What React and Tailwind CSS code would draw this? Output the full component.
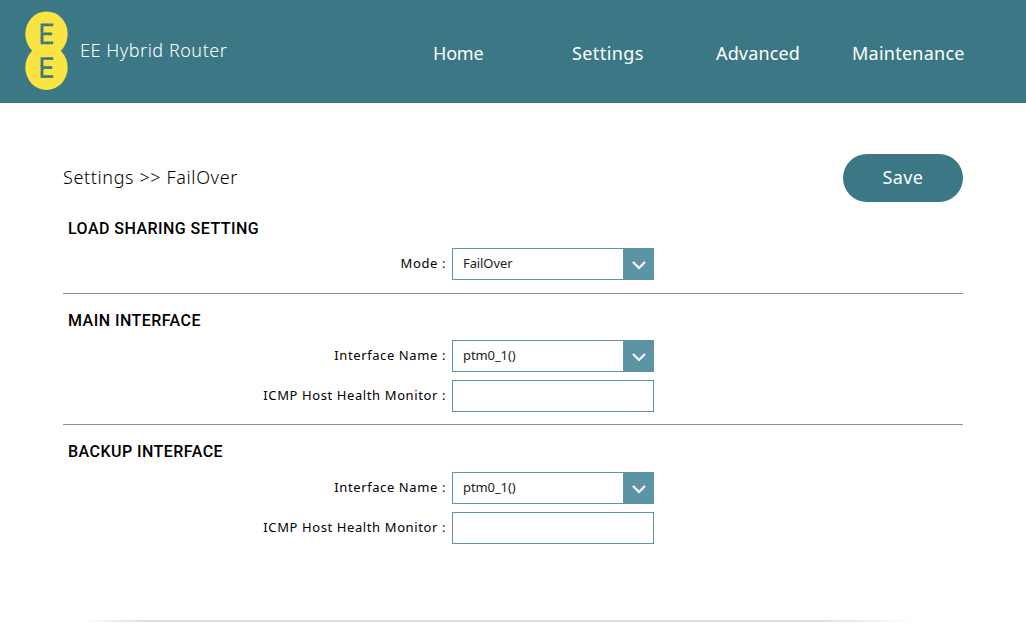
const dots = [];
for (let r = 0; r < 9; r++) {
  for (let c = 0; c < 5; c++) {
    if (c === 0 || r === 0 || r === 8 || r === 4) dots.push([c, r]);
  }
}

function LetterE({ y }) {
  return (
    <g fill="#3b7784">
      {dots.map(([c, r]) => (
        <circle key={`${c}-${r}`} cx={17 + c * (r === 4 ? 2.2 : 2.45)} cy={y + r * 2.25} r={1.6} />
      ))}
    </g>
  );
}

function Logo() {
  return (
    <svg className="h-[80px] w-[43px]" viewBox="0 0 43 80">
      <ellipse cx="21.5" cy="23" rx="21.2" ry="22.6" fill="#fae442" />
      <ellipse cx="21.5" cy="56.4" rx="21.2" ry="22.6" fill="#fae442" />
      <LetterE y={13.8} />
      <LetterE y={47.5} />
    </svg>
  );
}

function Field({ label, value }) {
  return (
    <div className="flex h-8 items-center">
      <div className="flex w-[383px] justify-end pb-px text-[13px] tracking-[0.6px] whitespace-pre">{label} :</div>
      <div className="ml-1.5 flex h-8 w-[202px] items-center justify-between border border-[#5c94a6]">
        {value && <span className="pb-px pl-2.5 text-[13px] tracking-[-0.1px] text-[#222]">{value}</span>}
        {value && (
          <span className="flex h-8 w-[30px] items-center justify-center bg-[#5c94a6] pl-0.5">
            <svg className="mt-0.5 h-[9px] w-[14px]" viewBox="0 0 14 9" fill="none" stroke="#fff" strokeWidth="2.2">
              <path d="M1 1l6 6 6-6" />
            </svg>
          </span>
        )}
      </div>
    </div>
  );
}

const Heading = ({ children }) => (
  <h2 className="pl-[5px] font-['Roboto',sans-serif] text-[16px] leading-6 font-medium tracking-[0.46px]">{children}</h2>
);

export default function App() {
  return (
    <div className="h-[636px] w-[1026px] overflow-hidden bg-white font-['Noto_Sans',sans-serif] text-black">
      <header className="flex h-[103px] bg-[#3b7784] text-[18px] leading-6 text-white">
        <div className="mt-[11px] ml-[25px]"><Logo /></div>
        <div className="mt-[38px] ml-[12px] w-[353px] font-light tracking-[0.53px]">EE Hybrid Router</div>
        <nav className="mt-[41px] flex">
          <span className="w-[139px] tracking-[-0.2px]">Home</span>
          <span className="w-[144px] tracking-[0.4px]">Settings</span>
          <span className="w-[136px] tracking-[0.15px]">Advanced</span>
          <span className="tracking-[0.25px]">Maintenance</span>
        </nav>
      </header>
      <main className="ml-[63px] w-[900px] pt-[51px]">
        <div className="flex h-12 items-center justify-between text-[18px]">
          <h1 className="pb-px font-light tracking-[0.62px]">Settings &gt;&gt; FailOver</h1>
          <button className="h-12 w-[120px] rounded-full bg-[#3b7784] pb-px tracking-[0.4px] text-white">Save</button>
        </div>
        <section className="h-[92px] border-b border-[#8f8f8f] pt-[15px]">
          <Heading>LOAD SHARING SETTING</Heading>
          <div className="pt-[7px]"><Field label="Mode" value="FailOver" /></div>
        </section>
        <section className="flex h-[131px] flex-col border-b border-[#8f8f8f] pt-[15px]">
          <Heading>MAIN INTERFACE</Heading>
          <div className="flex flex-col gap-2 pt-[7px]">
            <Field label="Interface Name" value="ptm0_1()" />
            <Field label="ICMP Host Health Monitor" />
          </div>
        </section>
        <section className="h-[195px] pt-[15px]">
          <Heading>BACKUP INTERFACE</Heading>
          <div className="flex flex-col gap-2 pt-2">
            <Field label="Interface Name" value="ptm0_1()" />
            <Field label="ICMP Host Health Monitor" />
          </div>
        </section>
        <div className="ml-[17px] flex h-0.5 w-[836px]">
          <div className="w-[65px] bg-linear-to-r from-white to-[#dedede]" />
          <div className="flex-1 bg-[#dedede]" />
          <div className="w-[100px] bg-linear-to-r from-[#dedede] to-white" />
        </div>
      </main>
    </div>
  );
}
